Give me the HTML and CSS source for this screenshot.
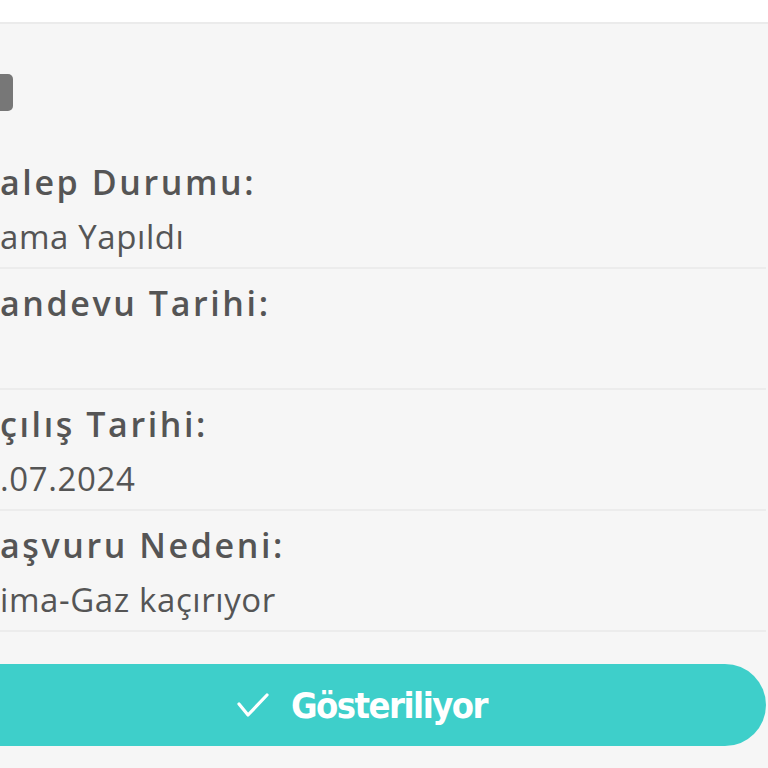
FILE: index.html
```html
<!DOCTYPE html>
<html lang="tr">
<head>
<meta charset="utf-8">
<link rel="stylesheet" href="styles.css">
</head>
<body>
<div class="topbar"></div>
<main class="page">
  <div class="chip"></div>
  <div class="rows">
    <div class="row">
      <div class="label">alep Durumu:</div>
      <div class="value">ama Yapıldı</div>
    </div>
    <div class="row">
      <div class="label">andevu Tarihi:</div>
      <div class="value"></div>
    </div>
    <div class="row">
      <div class="label">çılış Tarihi:</div>
      <div class="value">.07.2024</div>
    </div>
    <div class="row">
      <div class="label">aşvuru Nedeni:</div>
      <div class="value">ima-Gaz kaçırıyor</div>
    </div>
  </div>
  <button class="btn">
    <svg class="check" viewBox="0 0 32 24" width="32" height="24"><polyline points="2,11 11,22 30,2" fill="none" stroke="#fff" stroke-width="3.2" stroke-linecap="round" stroke-linejoin="round"/></svg>
    <span class="btn-text">Gösteriliyor</span>
  </button>
</main>
</body>
</html>
```
FILE: styles.css
```css
html, body {
  margin: 0;
  padding: 0;
  background: #f6f6f6;
  overflow: hidden;
  height: 768px;
}
body {
  font-family: "Open Sans", "Noto Sans", sans-serif;
  color: #555;
}
.topbar {
  height: 22px;
  background: #fff;
  border-bottom: 2px solid #ebebeb;
}
.page {
  margin-left: -42px;
  width: 808px;
  display: flex;
  flex-direction: column;
}
.chip {
  margin-top: 50px;
  margin-left: 15px;
  width: 40px;
  height: 37px;
  border-radius: 5px;
  background: #777;
}
.rows {
  margin-top: 37px;
  display: flex;
  flex-direction: column;
}
.row {
  display: flex;
  flex-direction: column;
  height: 119px;
  padding-left: 42px;
  border-bottom: 2px solid #ececec;
}
.label {
  padding-top: 12px;
  font-size: 34px;
  line-height: 44px;
  font-weight: 600;
  letter-spacing: 2.6px;
  white-space: nowrap;
}
.value {
  margin-top: 11px;
  font-size: 33px;
  line-height: 44px;
  height: 44px;
  font-weight: 400;
  letter-spacing: 0.6px;
  white-space: nowrap;
}
.btn {
  margin-top: 32px;
  height: 82px;
  width: 808px;
  border: none;
  border-radius: 41px;
  background: #3ecfca;
  display: flex;
  align-items: center;
  justify-content: center;
  gap: 22px;
  padding: 0;
  color: #fff;
}
.check { display: block; }
.btn-text {
  font-family: "DejaVu Sans Condensed", "DejaVu Sans", sans-serif;
  font-stretch: condensed;
  font-weight: 700;
  font-size: 36px;
  letter-spacing: -1.5px;
}
```
